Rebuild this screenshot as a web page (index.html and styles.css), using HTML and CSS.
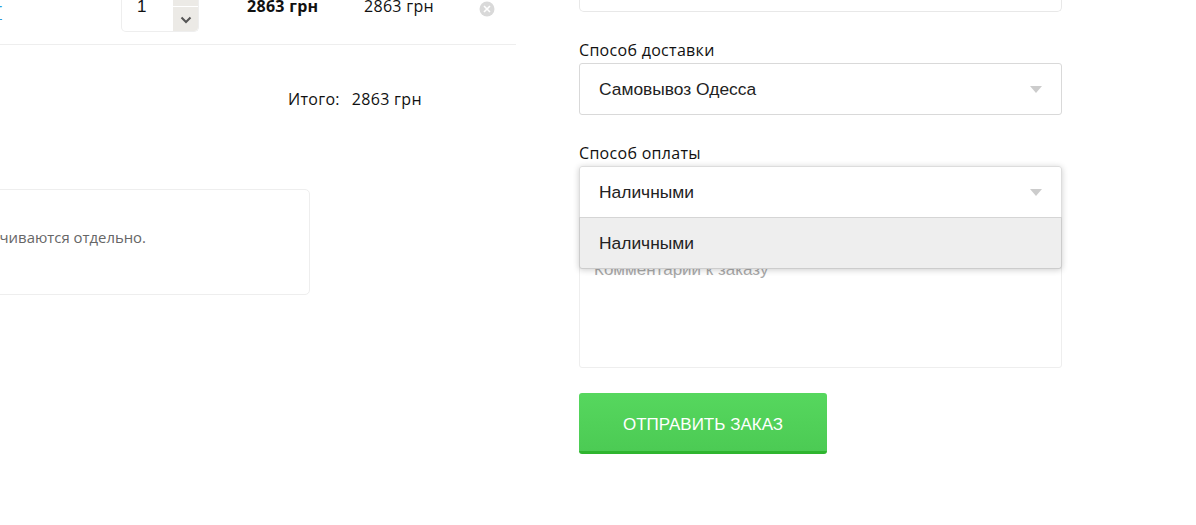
FILE: index.html
```html
<!DOCTYPE html>
<html lang="ru">
<head>
<meta charset="utf-8">
<title>Оформление заказа</title>
<link rel="stylesheet" href="styles.css">
</head>
<body>
<div class="page">
  <section class="cart">
    <div class="cart-row">
      <a class="item-link" href="#">Т</a>
      <div class="stepper">
        <span class="qty">1</span>
        <div class="arrows">
          <span class="arrow arrow-up"></span>
          <span class="arrow arrow-down">
            <svg width="12" height="8" viewBox="0 0 12 8"><path d="M1.5 1.5 6 6l4.5-4.5" fill="none" stroke="#555" stroke-width="2"/></svg>
          </span>
        </div>
      </div>
      <b class="price">2863 грн</b>
      <span class="sum">2863 грн</span>
      <svg class="remove" width="16" height="16" viewBox="0 0 16 16"><circle cx="8" cy="8" r="7.5" fill="#d9d9d9"/><path d="M5 5l6 6M11 5l-6 6" stroke="#fff" stroke-width="1.6"/></svg>
    </div>
    <div class="total"><span>Итого:</span><span>2863 грн</span></div>
    <div class="note">Услуги доставки оплачиваются отдельно.</div>
  </section>
  <form class="order">
    <div class="stub"></div>
    <label class="label">Способ доставки</label>
    <div class="select"><span>Самовывоз Одесса</span><i class="caret"></i></div>
    <label class="label label-pay">Способ оплаты</label>
    <div class="field-open">
      <div class="select select-open"><span>Наличными</span><i class="caret"></i></div>
      <div class="dropdown">Наличными</div>
    </div>
    <div class="comment">Комментарий к заказу</div>
    <button class="submit" type="button">ОТПРАВИТЬ ЗАКАЗ</button>
  </form>
</div>
</body>
</html>
```

FILE: styles.css
```css
html, body { margin: 0; padding: 0; background: #fff; }
body { width: 1196px; height: 525px; overflow: hidden; font-family: "Open Sans", sans-serif; font-size: 16px; letter-spacing: .3px; color: #111; }
.page { display: flex; gap: 63px; align-items: flex-start; margin-top: -40px; }
.cart { width: 516px; flex: none; }
.cart-row { height: 84px; border-bottom: 1px solid #eee; display: flex; align-items: flex-end; position: relative; }
.item-link { position: absolute; left: -7px; top: 42px; color: #2a9fe0; font-size: 16px; line-height: 20px; text-decoration: underline; }
.stepper { margin-left: 121px; margin-bottom: 12px; width: 78px; height: 50px; display: flex; box-sizing: border-box; border: 1px solid #eee; border-top: 0; border-radius: 0 0 5px 5px; overflow: hidden; }
.qty { width: 52px; padding: 14px 0 0 15px; box-sizing: border-box; font-family: "Liberation Sans", sans-serif; font-size: 17px; line-height: 22px; }
.arrows { width: 25px; display: flex; flex-direction: column; gap: 1px; background: #fff; }
.arrow { flex: none; background: #eceae6; display: flex; align-items: center; justify-content: center; }
.arrow-up { height: 24px; }
.arrow-down { flex: 1; padding-top: 1px; }
.price { position: absolute; left: 247px; top: 36px; line-height: 20px; font-weight: 700; }
.sum { position: absolute; left: 364px; top: 36px; line-height: 20px; }
.remove { position: absolute; left: 479px; top: 41px; }
.total { display: flex; gap: 12px; margin: 44px 0 0 288px; line-height: 20px; }
.note { margin: 80px 0 0 -200px; width: 510px; height: 106px; box-sizing: border-box; border: 1px solid #eee; border-radius: 5px; padding: 37px 163px 0 0; text-align: right; font-size: 14.9px; letter-spacing: 0; line-height: 20px; color: #666; }
.order { width: 483px; flex: none; }
.stub { height: 52px; box-sizing: border-box; border: 1px solid #e8e8e8; border-top: 0; border-radius: 0 0 5px 5px; }
.label { display: block; margin-top: 28px; line-height: 20px; }
.label-pay { margin-top: 28px; }
.select { margin-top: 3px; height: 52px; box-sizing: border-box; border: 1px solid #d9d9d9; border-radius: 3px; padding: 0 19px; display: flex; align-items: center; justify-content: space-between; font-family: "Liberation Sans", sans-serif; font-size: 17.4px; letter-spacing: 0; color: #222; }
.caret { width: 0; height: 0; border: 6px solid transparent; border-top: 7px solid #ccc; border-bottom: 0; }
.field-open { position: relative; box-shadow: 0 1px 6px rgba(0,0,0,.2); margin-top: 3px; border-radius: 3px; height: 103px; z-index: 1; }
.select-open { margin-top: 0; background: #fff; border-color: #ddd; border-radius: 3px 3px 0 0; }
.dropdown { height: 52px; box-sizing: border-box; background: #eee; border: 1px solid #ccc; border-top-color: #d5d5d5; border-radius: 0 0 3px 3px; margin-top: -1px; padding: 0 19px; display: flex; align-items: center; font-family: "Liberation Sans", sans-serif; font-size: 17.4px; letter-spacing: 0; color: #222; }
.comment { margin-top: -10px; height: 109px; box-sizing: border-box; border: 1px solid #eee; border-radius: 3px; padding: 0 14px; font-family: "Liberation Sans", sans-serif; font-size: 17px; letter-spacing: 0; line-height: 20px; color: #aaa; }
.submit { display: block; margin-top: 25px; width: 248px; height: 61px; border: 0; border-bottom: 3px solid #2fb52f; border-radius: 3px; background: linear-gradient(#56d75e, #4ccb54); color: #fff; font-family: "Liberation Sans", sans-serif; font-size: 17px; letter-spacing: 0; padding: 5px 0 0; }
```
